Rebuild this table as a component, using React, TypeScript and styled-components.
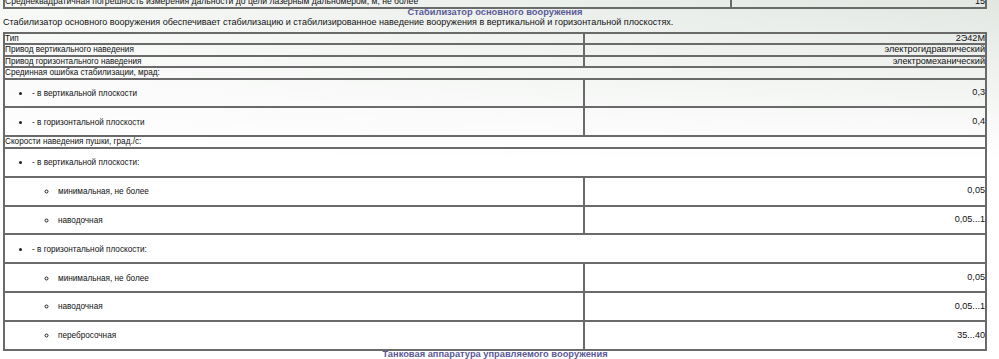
import React from "react";
import styled, { createGlobalStyle } from "styled-components";

interface Row {
  label: string;
  value?: string;
  level?: 0 | 1 | 2;
}

const rows: Row[] = [
  { label: "Тип", value: "2Э42М" },
  { label: "Привод вертикального наведения", value: "электрогидравлический" },
  { label: "Привод горизонтального наведения", value: "электромеханический" },
  { label: "Срединная ошибка стабилизации, мрад:" },
  { label: "- в вертикальной плоскости", value: "0,3", level: 1 },
  { label: "- в горизонтальной плоскости", value: "0,4", level: 1 },
  { label: "Скорости наведения пушки, град./с:" },
  { label: "- в вертикальной плоскости:", level: 1 },
  { label: "минимальная, не более", value: "0,05", level: 2 },
  { label: "наводочная", value: "0,05...1", level: 2 },
  { label: "- в горизонтальной плоскости:", level: 1 },
  { label: "минимальная, не более", value: "0,05", level: 2 },
  { label: "наводочная", value: "0,05...1", level: 2 },
  { label: "перебросочная", value: "35...40", level: 2 },
];

const GlobalStyle = createGlobalStyle`
  html, body {
    margin: 0;
    padding: 0;
  }
  body {
    min-height: 359px;
    background:
      linear-gradient(to bottom, rgba(255, 255, 255, 0) 0, #fff 160px),
      linear-gradient(to right, #f6f8f6 0, #e2e7e2 100%);
    overflow: hidden;
  }
`;

const Page = styled.div`
  width: 984px;
  margin-left: 3px;
  font-family: "Liberation Sans", Arial, sans-serif;
  font-size: 9.1px;
  line-height: 9.5px;
  color: #111;
`;

const Table = styled.table<{ $top?: boolean }>`
  width: 100%;
  border-collapse: separate;
  border-spacing: 0;
  border: 1px solid #6a6a6a;
  margin-top: ${(p) => (p.$top ? "-5px" : "0")};
  td {
    border: 1px solid #6a6a6a;
    padding: 0;
    vertical-align: middle;
  }
`;

const Tr = styled.tr<{ $tall?: boolean }>`
  height: ${(p) => (p.$tall ? "28.9px" : "11.5px")};
`;

const Label = styled.td<{ $width: string; $size: string }>`
  width: ${(p) => p.$width};
  font-size: ${(p) => p.$size};
  text-align: left;
`;

const SpanCell = styled.td`
  font-size: 8.2px;
`;

const Value = styled.td`
  text-align: right;
`;

const Title = styled.div`
  text-align: center;
  font-weight: bold;
  font-size: 9.3px;
  line-height: 10px;
  color: #5a5a96;
  margin-top: -2px;
`;

const Intro = styled.p`
  margin: 0 0 5px;
  font-size: 9.05px;
  line-height: 10px;
`;

const List = styled.ul<{ $nested?: boolean }>`
  margin: 0;
  padding-left: ${(p) => (p.$nested ? "26px" : "27px")};
  list-style-type: ${(p) => (p.$nested ? "circle" : "disc")};
  li {
    line-height: 9.5px;
  }
  li::marker {
    font-size: 11px;
    color: #222;
  }
`;

function LabelContent({ row }: { row: Row }) {
  if (row.level === 1) {
    return (
      <List>
        <li>{row.label}</li>
      </List>
    );
  }
  if (row.level === 2) {
    return (
      <List>
        <List as="ul" $nested>
          <li>{row.label}</li>
        </List>
      </List>
    );
  }
  return <>{row.label}</>;
}

export default function App() {
  return (
    <Page>
      <GlobalStyle />
      <Table $top>
        <tbody>
          <Tr>
            <Label $width="74%" $size="8.6px">
              Среднеквадратичная погрешность измерения дальности до цели лазерным дальномером, м, не более
            </Label>
            <Value>15</Value>
          </Tr>
        </tbody>
      </Table>
      <Title>Стабилизатор основного вооружения</Title>
      <Intro>
        Стабилизатор основного вооружения обеспечивает стабилизацию и стабилизированное наведение
        вооружения в вертикальной и горизонтальной плоскостях.
      </Intro>
      <Table>
        <tbody>
          {rows.map((row, i) =>
            row.value === undefined ? (
              <Tr key={i} $tall={!!row.level}>
                <SpanCell colSpan={2}>
                  <LabelContent row={row} />
                </SpanCell>
              </Tr>
            ) : (
              <Tr key={i} $tall={!!row.level}>
                <Label $width="59.1%" $size="8.2px">
                  <LabelContent row={row} />
                </Label>
                <Value>{row.value}</Value>
              </Tr>
            )
          )}
        </tbody>
      </Table>
      <Title>Танковая аппаратура управляемого вооружения</Title>
    </Page>
  );
}
